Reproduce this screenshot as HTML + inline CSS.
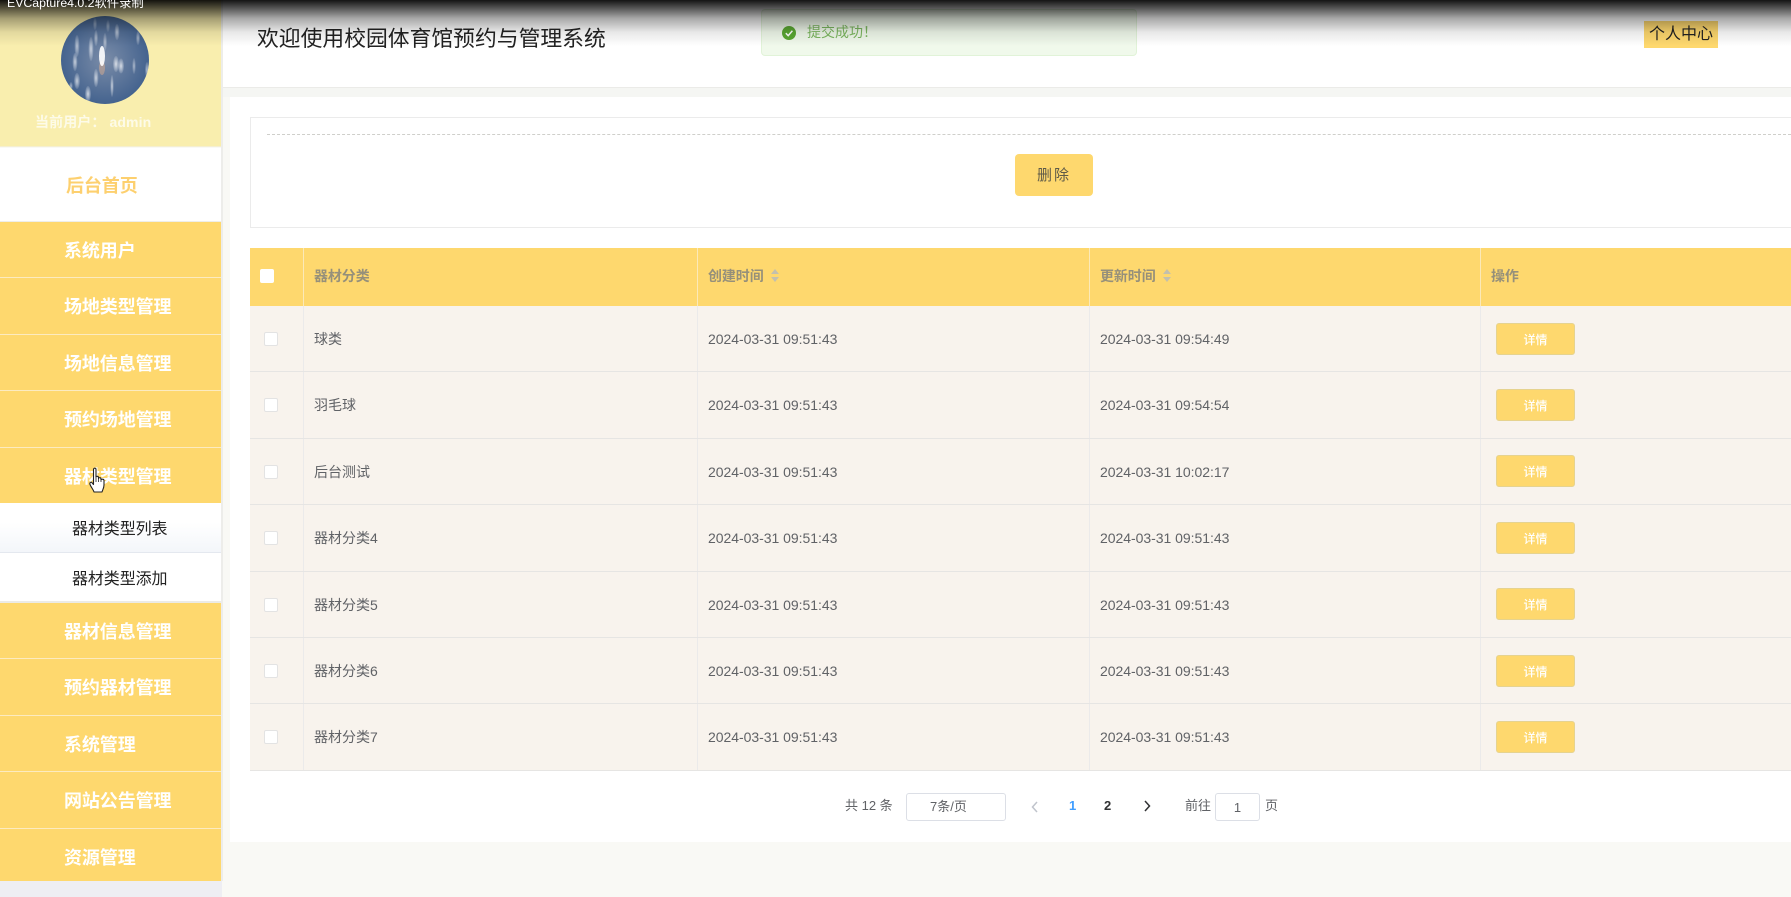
<!DOCTYPE html>
<html><head><meta charset="utf-8"><style>
html,body{margin:0;padding:0;width:1791px;height:897px;overflow:hidden;background:#f9f9f5;font-family:"Liberation Sans","Noto Sans CJK SC",sans-serif}
body{filter:blur(.35px)}
div,span{position:absolute;box-sizing:border-box;white-space:nowrap}
.m{left:0;width:221px;height:56.4px;background:#fed86e;border-bottom:1px solid #fcebc0;color:#fff;font-size:18px;font-weight:700;line-height:58px;padding-left:64px;letter-spacing:-.1px}
.s{left:0;width:221px;height:50px;background:#fff;border-bottom:1px solid #e4e8ef;color:#222;font-size:16px;line-height:54px;padding-left:72px;letter-spacing:-.1px}
.r{left:250px;width:1541px;height:66.4px;background:#f8f3ed;border-bottom:1px solid #e6e5e3;font-size:14px;color:#606266;line-height:66px}
.r span{top:0}
.v{top:0;bottom:0;width:1px;background:#ebeaea}
.c{left:13.5px;top:26px!important;width:14px;height:14px;background:#fff;border:1px solid #e3e3e3;border-radius:2px}
.n{left:64px}.d1{left:458px;letter-spacing:-.03px}.d2{left:850px;letter-spacing:-.03px}
.b{left:1246px;top:16.500px!important;width:79px;height:32px;background:#fed86e;border:1px solid #e6d38f;border-radius:3px;color:#fff;font-size:12px;line-height:33px;text-align:center;font-weight:500}
.h{font-size:14px;font-weight:700;color:#96907a;line-height:20px;top:266px;letter-spacing:-.1px}
.p{font-size:13px;color:#606266;line-height:20px;top:796px}
</style></head><body>
<!-- main -->
<div style="left:222px;top:0;width:1569px;height:88px;background:#fff;border-bottom:1px solid #ebebe8"></div>
<div style="left:222px;top:88px;width:1569px;height:9px;background:#f5f6f3"></div>
<div style="left:229.5px;top:97px;width:1562px;height:745px;background:#fff"></div>
<div style="left:257px;top:23px;font-size:21.800px;line-height:32px;color:#222">欢迎使用校园体育馆预约与管理系统</div>
<div style="left:1644px;top:21px;width:74px;height:27px;background:#fed86e;color:#222;font-size:16px;line-height:28px;text-align:center">个人中心</div>
<!-- form box -->
<div style="left:250px;top:117px;width:1560px;height:111px;border:1px solid #ebebeb"></div>
<div style="left:267px;top:134px;width:1524px;border-top:1px dashed #cfcfcb"></div>
<div style="left:1015px;top:154px;width:78px;height:42px;background:#fed86e;border-radius:4px;color:#5e5a48;font-size:15px;letter-spacing:2px;line-height:44px;text-align:center">删除</div>
<!-- table head -->
<div style="left:250px;top:248px;width:1541px;height:58px;background:#fed86e"></div>
<div style="left:303px;top:248px;width:1px;height:58px;background:#fbe9b8"></div>
<div style="left:697px;top:248px;width:1px;height:58px;background:#fbe9b8"></div>
<div style="left:1089px;top:248px;width:1px;height:58px;background:#fbe9b8"></div>
<div style="left:1480px;top:248px;width:1px;height:58px;background:#fbe9b8"></div>
<div style="left:260px;top:269px;width:14px;height:14px;background:#fff;border-radius:2px"></div>
<div class="h" style="left:314px">器材分类</div>
<div class="h" style="left:708px">创建时间</div>
<div class="h" style="left:1100px">更新时间</div>
<div class="h" style="left:1491px">操作</div>
<svg style="position:absolute;left:770px;top:269px" width="10" height="14"><path d="M5 0L9 5H1Z M1 8H9L5 13Z" fill="#c3c0ae"/></svg>
<svg style="position:absolute;left:1162px;top:269px" width="10" height="14"><path d="M5 0L9 5H1Z M1 8H9L5 13Z" fill="#c3c0ae"/></svg>
<!-- rows -->
<div class="r" style="top:306px"><i class="v" style="position:absolute;left:53px"></i><i class="v" style="position:absolute;left:447px"></i><i class="v" style="position:absolute;left:839px"></i><i class="v" style="position:absolute;left:1230px"></i><span class="c"></span><span class="n">球类</span><span class="d1">2024-03-31 09:51:43</span><span class="d2">2024-03-31 09:54:49</span><span class="b">详情</span></div>
<div class="r" style="top:372.4px"><i class="v" style="position:absolute;left:53px"></i><i class="v" style="position:absolute;left:447px"></i><i class="v" style="position:absolute;left:839px"></i><i class="v" style="position:absolute;left:1230px"></i><span class="c"></span><span class="n">羽毛球</span><span class="d1">2024-03-31 09:51:43</span><span class="d2">2024-03-31 09:54:54</span><span class="b">详情</span></div>
<div class="r" style="top:438.8px"><i class="v" style="position:absolute;left:53px"></i><i class="v" style="position:absolute;left:447px"></i><i class="v" style="position:absolute;left:839px"></i><i class="v" style="position:absolute;left:1230px"></i><span class="c"></span><span class="n">后台测试</span><span class="d1">2024-03-31 09:51:43</span><span class="d2">2024-03-31 10:02:17</span><span class="b">详情</span></div>
<div class="r" style="top:505.2px"><i class="v" style="position:absolute;left:53px"></i><i class="v" style="position:absolute;left:447px"></i><i class="v" style="position:absolute;left:839px"></i><i class="v" style="position:absolute;left:1230px"></i><span class="c"></span><span class="n">器材分类4</span><span class="d1">2024-03-31 09:51:43</span><span class="d2">2024-03-31 09:51:43</span><span class="b">详情</span></div>
<div class="r" style="top:571.6px"><i class="v" style="position:absolute;left:53px"></i><i class="v" style="position:absolute;left:447px"></i><i class="v" style="position:absolute;left:839px"></i><i class="v" style="position:absolute;left:1230px"></i><span class="c"></span><span class="n">器材分类5</span><span class="d1">2024-03-31 09:51:43</span><span class="d2">2024-03-31 09:51:43</span><span class="b">详情</span></div>
<div class="r" style="top:638px"><i class="v" style="position:absolute;left:53px"></i><i class="v" style="position:absolute;left:447px"></i><i class="v" style="position:absolute;left:839px"></i><i class="v" style="position:absolute;left:1230px"></i><span class="c"></span><span class="n">器材分类6</span><span class="d1">2024-03-31 09:51:43</span><span class="d2">2024-03-31 09:51:43</span><span class="b">详情</span></div>
<div class="r" style="top:704.4px"><i class="v" style="position:absolute;left:53px"></i><i class="v" style="position:absolute;left:447px"></i><i class="v" style="position:absolute;left:839px"></i><i class="v" style="position:absolute;left:1230px"></i><span class="c"></span><span class="n">器材分类7</span><span class="d1">2024-03-31 09:51:43</span><span class="d2">2024-03-31 09:51:43</span><span class="b">详情</span></div>
<!-- pagination -->
<div class="p" style="left:845px">共 12 条</div>
<div style="left:906px;top:793px;width:100px;height:28px;border:1px solid #dcdfe6;border-radius:3px;background:#fff;font-size:13px;color:#606266;line-height:26px;padding-left:23px">7条/页</div>
<svg style="position:absolute;left:1030px;top:800px" width="10" height="14"><path d="M7 2L2.500 7L7 12" fill="none" stroke="#c0c4cc" stroke-width="1.500"/></svg>
<div class="p" style="left:1069px;color:#409eff;font-weight:700">1</div>
<div class="p" style="left:1104px;color:#303133;font-weight:700">2</div>
<svg style="position:absolute;left:1142px;top:799px" width="10" height="14"><path d="M3 2L7.500 7L3 12" fill="none" stroke="#303133" stroke-width="1.500"/></svg>
<div class="p" style="left:1185px">前往</div>
<div style="left:1215px;top:793px;width:45px;height:28px;border:1px solid #dcdfe6;border-radius:3px;background:#fff;font-size:13px;color:#606266;line-height:27px;text-align:center">1</div>
<div class="p" style="left:1265px">页</div>
<!-- toast -->
<div style="left:761px;top:9px;width:376px;height:47px;background:#f0f9eb;border:1px solid #e1f3d8;border-radius:4px"></div>
<svg style="position:absolute;left:782px;top:26px" width="14" height="14"><circle cx="7" cy="7" r="7" fill="#5aa832"/><path d="M3.800 7.200L6.200 9.600L10.400 4.800" fill="none" stroke="#fff" stroke-width="1.500"/></svg>
<div style="left:807px;top:22px;font-size:14px;line-height:20px;color:#7cb860">提交成功！</div>
<!-- sidebar -->
<div style="left:221px;top:0;width:2px;height:881px;background:#ededea"></div>
<div style="left:0;top:0;width:221px;height:147px;background:#f9eeae;border-bottom:1px solid #f5efd0"></div>
<svg style="position:absolute;left:61px;top:16px" width="88" height="88" viewBox="0 0 88 88">
<defs><radialGradient id="g" cx="50%" cy="50%" r="55%"><stop offset="0" stop-color="#7a8ca8"/><stop offset="1" stop-color="#3f5f8c"/></radialGradient>
<radialGradient id="w"><stop offset="0" stop-color="#fff"/><stop offset="1" stop-color="#fff" stop-opacity=".15"/></radialGradient>
<clipPath id="cp"><circle cx="44" cy="44" r="44"/></clipPath></defs>
<g clip-path="url(#cp)"><rect width="88" height="88" fill="url(#g)"/>
<ellipse cx="41" cy="52" rx="3" ry="7" fill="#e9b48f" opacity=".45"/>
<ellipse cx="41" cy="40" rx="3" ry="10" fill="#fff" opacity=".9"/>
<g fill="url(#w)" opacity=".75">
<ellipse cx="16" cy="30" rx="2.500" ry="11" opacity=".8"/><ellipse cx="30" cy="33" rx="2.500" ry="12" opacity=".9"/><ellipse cx="35" cy="22" rx="2" ry="8" opacity=".7"/><ellipse cx="44" cy="26" rx="2" ry="9" opacity=".7"/><ellipse cx="56" cy="16" rx="2.500" ry="8" opacity=".8"/><ellipse cx="47" cy="10" rx="2" ry="6" opacity=".5"/><ellipse cx="34" cy="8" rx="2" ry="6" opacity=".5"/><ellipse cx="77" cy="22" rx="2" ry="7" opacity=".7"/><ellipse cx="14" cy="46" rx="2.500" ry="9" opacity=".9"/><ellipse cx="16" cy="65" rx="3" ry="8" opacity=".9"/><ellipse cx="10" cy="70" rx="1.800" ry="4" opacity=".7"/><ellipse cx="35" cy="62" rx="2.500" ry="9" opacity=".9"/><ellipse cx="55" cy="48" rx="3" ry="8"/><ellipse cx="60" cy="50" rx="3" ry="7.500"/><ellipse cx="51" cy="70" rx="1.700" ry="11" opacity=".9"/><ellipse cx="27" cy="78" rx="3" ry="8"/><ellipse cx="73" cy="50" rx="1.800" ry="8" opacity=".7"/><ellipse cx="86" cy="54" rx="2" ry="8" opacity=".8"/></g>
</g></svg>
<div style="left:35px;top:112px;font-size:14px;font-weight:700;line-height:20px;color:#fdfbe8;letter-spacing:.1px">当前用户： admin</div>
<div style="left:0;top:148px;width:221px;height:74px;background:#fff;border-bottom:1px solid #eeeeea;color:#fdd06f;font-size:18px;font-weight:700;line-height:76px;padding-left:66px;letter-spacing:-.1px">后台首页</div>
<div class="m" style="top:222px">系统用户</div>
<div class="m" style="top:278.400px">场地类型管理</div>
<div class="m" style="top:334.800px">场地信息管理</div>
<div class="m" style="top:391.200px">预约场地管理</div>
<div class="m" style="top:447.600px;height:55.400px;border-bottom:0">器材类型管理</div>
<div class="s" style="top:503px;background:linear-gradient(#fff 40%,#f3f6fa)">器材类型列表</div>
<div class="s" style="top:553px;height:50px;border-bottom:2px solid #ecebe6">器材类型添加</div>
<div class="m" style="top:603px">器材信息管理</div>
<div class="m" style="top:659.400px">预约器材管理</div>
<div class="m" style="top:715.800px">系统管理</div>
<div class="m" style="top:772.200px">网站公告管理</div>
<div class="m" style="top:828.600px;height:52.400px;border-bottom:0">资源管理</div>
<div style="left:0;top:881px;width:222px;height:16px;background:#eeeef3"></div>
<!-- cursor -->
<svg style="position:absolute;left:89px;top:467px" width="18" height="26" viewBox="0 0 18 26"><path d="M4.500 2.500C4.500 .8 7 .8 7 2.500V10C7 9 9.500 9 9.500 10.500V11.500C9.500 10.300 12 10.300 12 12V13C12 11.800 15 11.800 15 13.500V18C15 21 13.500 23 13 25H5C4.500 23 2 20 1 17.500C.3 15.500 2.200 14.500 3.200 16L4.500 17.500Z" fill="#fff" stroke="#222" stroke-width="1.100" stroke-linejoin="round"/><path d="M7 10V15M9.500 11V15M12 12.500V15" stroke="#222" stroke-width=".8"/></svg>
<!-- top shadow -->
<div style="left:0;top:0;width:1791px;height:46px;background:linear-gradient(rgba(0,0,0,.92) 0,rgba(0,0,0,.72) 14%,rgba(0,0,0,.34) 40%,rgba(0,0,0,.09) 70%,rgba(0,0,0,0) 100%)"></div>
<div style="left:7px;top:-5px;font-size:12.300px;line-height:16px;color:#fff">EVCapture4.0.2软件录制</div>
</body></html>
